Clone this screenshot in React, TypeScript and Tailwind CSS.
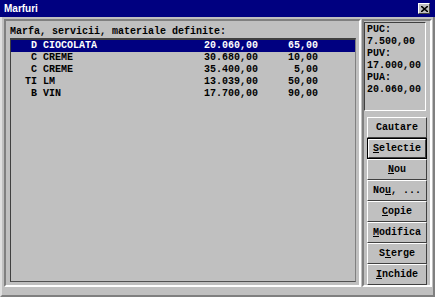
import React from 'react';

const rows = [
  { code: 'D', name: 'CIOCOLATA', price: '20.060,00', qty: '65,00' },
  { code: 'C', name: 'CREME', price: '30.680,00', qty: '10,00' },
  { code: 'C', name: 'CREME', price: '35.400,00', qty: '5,00' },
  { code: 'TI', name: 'LM', price: '13.039,00', qty: '50,00' },
  { code: 'B', name: 'VIN', price: '17.700,00', qty: '90,00' },
];

const mono = { fontFamily: '"Liberation Mono", "Courier New", monospace' };

// label with one underlined mnemonic letter
const Btn: React.FC<{ pre?: string; key_?: string; post?: string; def?: boolean }> = ({ pre = '', key_ = '', post = '', def }) => (
  <div className={`h-[21px] w-[60px] ${def ? 'border border-black' : ''}`}>
    <div className="h-full w-full border border-t-white border-l-white border-r-[#404040] border-b-[#404040] bg-[#c0c0c0] flex items-center justify-center">
      <span className="text-[10px] font-bold leading-[12px] text-black whitespace-pre" style={mono}>
        {pre}
        {key_ && <u className="underline-offset-[1px]">{key_}</u>}
        {post}
      </span>
    </div>
  </div>
);

export default function App() {
  return (
    <div className="w-[435px] h-[297px] bg-[#c0c0c0] flex flex-col overflow-hidden">
      {/* title bar */}
      <div className="h-[17px] bg-[#000080] flex items-center justify-between pl-[4px] pr-[5px]">
        <span className="text-white text-[10px] font-bold" style={{ fontFamily: '"Liberation Sans", Arial, sans-serif' }}>
          Marfuri
        </span>
        <div className="w-[12px] h-[11px] bg-[#c0c0c0] border border-t-white border-l-white border-r-[#404040] border-b-[#404040] flex items-center justify-center">
          <svg width="7" height="6" viewBox="0 0 7 6">
            <path d="M0 0 L7 6 M7 0 L0 6" stroke="black" strokeWidth="1.6" />
          </svg>
        </div>
      </div>

      {/* body */}
      <div className="flex-1 flex border-l-2 border-r-2 border-b-2 border-l-[#e0e0e0] border-r-[#808080] border-b-[#808080]">
        {/* left group */}
        <div className="ml-[2px] mt-[2px] w-[357px] h-[268px] border-2 border-t-[#808080] border-l-[#808080] border-r-white border-b-white flex flex-col pl-[4px] pt-[5px]">
          <div className="text-[10px] font-bold leading-[12px] text-black whitespace-pre" style={mono}>
            Marfa, servicii, materiale definite:
          </div>
          <div className="w-[346px] h-[244px] border border-t-2 border-[#404040] border-r-[#808080] border-b-[#505050]">
            {rows.map((r, i) => (
              <div
                key={i}
                className={`h-[12px] flex items-center pl-[2px] text-[10px] font-bold leading-[12px] whitespace-pre ${i === 0 ? 'bg-[#000080] text-white' : 'text-black'}`}
                style={mono}
              >
                <span className="w-[24px] text-right">{r.code}</span>
                <span className="ml-[6px] w-[126px]">{r.name}</span>
                <span className="w-[89px] text-right">{r.price}</span>
                <span className="w-[60px] text-right">{r.qty}</span>
              </div>
            ))}
          </div>
        </div>

        {/* right group */}
        <div className="ml-[1px] mt-[2px] w-[70px] h-[268px] border-2 border-t-[#808080] border-l-[#808080] border-r-white border-b-white flex flex-col">
          <div
            className="mt-[1px] w-[62px] h-[89px] border border-t-[#404040] border-l-[#404040] border-r-white border-b-white pl-[2px] pt-[1px] text-[10px] font-bold leading-[12px] text-black whitespace-pre"
            style={mono}
          >
            <div>PUC:</div>
            <div>7.500,00</div>
            <div>PUV:</div>
            <div>17.000,00</div>
            <div>PUA:</div>
            <div>20.060,00</div>
          </div>
          <div className="mt-[6px] ml-[3px] flex flex-col">
            <Btn pre="Cautare" />
            <Btn key_="S" post="electie" def />
            <Btn key_="N" post="ou" />
            <Btn pre="No" key_="u" post=", ..." />
            <Btn key_="C" post="opie" />
            <Btn key_="M" post="odifica" />
            <Btn pre="S" key_="t" post="erge" />
            <Btn key_="I" post="nchide" />
          </div>
        </div>
      </div>
    </div>
  );
}
